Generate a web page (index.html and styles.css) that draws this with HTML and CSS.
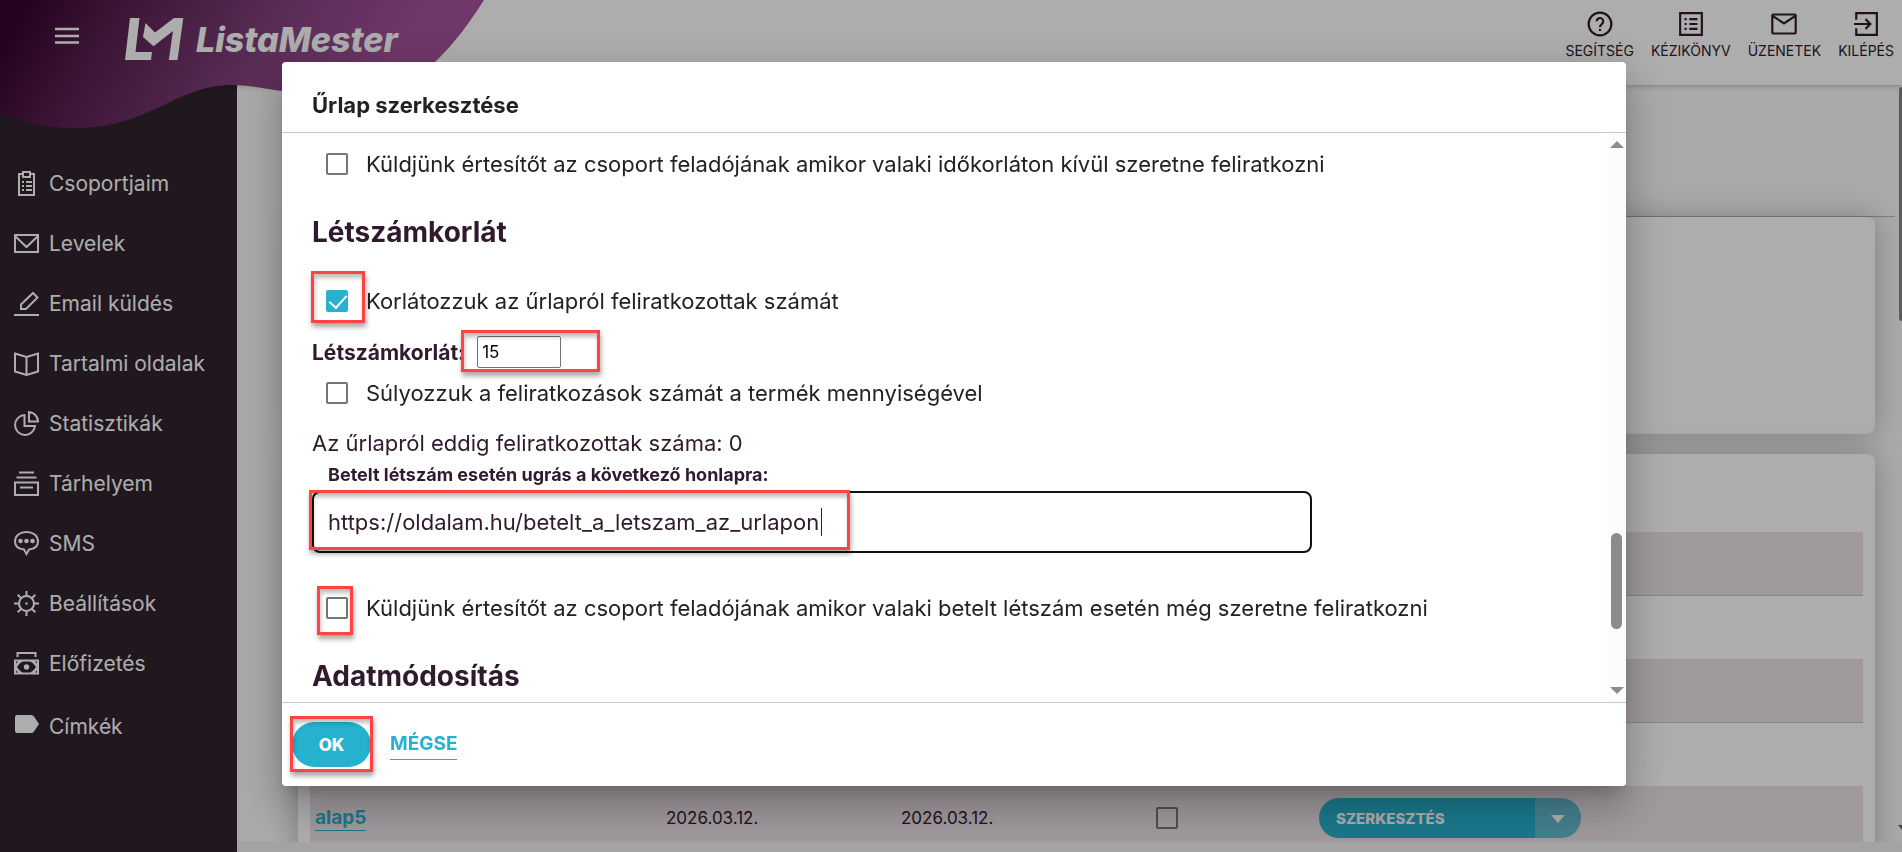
FILE: index.html
```html
<!DOCTYPE html>
<html lang="hu">
<head>
<meta charset="UTF-8">
<meta name="viewport" content="width=device-width, initial-scale=1.0">
<title>ListaMester</title>
<link rel="stylesheet" href="styles.css">
</head>
<body>

<div class="page">
  <header class="topbar">
    <!-- Purple wave behind the logo -->
    <svg class="wave" width="500" height="130" viewBox="0 0 500 130">
      <defs>
        <linearGradient id="waveFill" gradientUnits="userSpaceOnUse" x1="30" y1="0" x2="330" y2="170">
          <stop offset="0" stop-color="#37062f"/>
          <stop offset="0.25" stop-color="#5a2150"/>
          <stop offset="0.65" stop-color="#84417e"/>
          <stop offset="1" stop-color="#a5519b"/>
        </linearGradient>
      </defs>
      <path fill="url(#waveFill)" d="M0 0H484C470 22 455 43 435 62C400 95 350 101 282 91C262 88 248 85 233 85C175 85 150 128 75 128C48 128 22 122 0 113Z"/>
    </svg>
    <button class="menu-btn" type="button" aria-label="Menü">
      <svg width="24" height="18" viewBox="0 0 24 18"><path d="M0 2h24M0 9h24M0 15.500h24" stroke="#fff" stroke-width="2.500"/></svg>
    </button>
    <a class="logo" href="#">
      <svg width="59" height="43" viewBox="125 18 59 43" fill="#fff">
        <path d="M130 18h9.500L135.500 52H152l-1 8H125z"/>
        <path d="M145.500 23l9.500 9.500L174 18h9.300L177.500 60h-8.700L173 31 153.500 46.300 143 37z"/>
      </svg>
      <span>ListaMester</span>
    </a>
    <nav class="top-links">
      <a href="#">
        <svg width="26" height="26" viewBox="0 0 24 24" class="stroke"><circle cx="12" cy="12" r="10.500"/><path d="M9 9.500a3 3 0 1 1 4.800 2.400C12.700 12.700 12 13.300 12 15M12 16.500v2"/></svg>
        SEGÍTSÉG
      </a>
      <a href="#">
        <svg width="26" height="26" viewBox="0 0 24 24" class="stroke"><path d="M2 2h20v20H2zM6 7.500h2M6 12h2M6 16.500h2M10.500 7.500h7.500M10.500 12h7.500M10.500 16.500h7.500"/></svg>
        KÉZIKÖNYV
      </a>
      <a href="#">
        <svg width="26" height="26" viewBox="0 0 24 24" class="stroke"><rect x="1.200" y="3.200" width="21.600" height="17.600" rx="1"/><path d="M1.500 4.500 12 11.500 22.500 4.500"/></svg>
        ÜZENETEK
      </a>
      <a href="#">
        <svg width="26" height="26" viewBox="0 0 24 24" class="stroke"><path d="M3 8V2h19v20H3v-6M1 12h15M11.500 7.500 16 12l-4.500 4.500"/></svg>
        KILÉPÉS
      </a>
    </nav>
  </header>

  <div class="body-row">
    <nav class="sidebar">
      <a href="#">
        <svg viewBox="0 0 25 25" class="side-icon"><path d="M9 3H5v21h15V3h-4M9 1h7v5H9zM8 11h2M12 11h6M8 15h2M12 15h6M8 19h2M12 19h6"/></svg>
        Csoportjaim
      </a>
      <a href="#">
        <svg viewBox="0 0 25 25" class="side-icon"><path d="M1 4h23v17H1zM1 5l11.500 11L24 5"/></svg>
        Levelek
      </a>
      <a href="#">
        <svg viewBox="0 0 25 25" class="side-icon"><path d="M0 24h25M7 18v-4.500L19 2l4.500 4.500L12 18z"/></svg>
        Email küldés
      </a>
      <a href="#">
        <svg viewBox="0 0 25 25" class="side-icon"><path d="M1 2.500 12.500 6 24 2.500v18L12.500 24 1 20.500zM12.500 6v18"/></svg>
        Tartalmi oldalak
      </a>
      <a href="#">
        <svg viewBox="0 0 25 25" class="side-icon"><path d="M10.500 4A10 10 0 1 0 21 15H10.500zM15 1v9.500h9A9.500 9.500 0 0 0 15 1z"/></svg>
        Statisztikák
      </a>
      <a href="#">
        <svg viewBox="0 0 25 25" class="side-icon"><path d="M5 1.500h15M2.500 6.500h20M1 11.500h23V24H1zM6 16.500h13"/></svg>
        Tárhelyem
      </a>
      <a href="#">
        <svg viewBox="0 0 25 25" class="side-icon"><path d="M12.500 23 10 18.500C4.500 18 1 15 1 10.500 1 4.500 6 1 12.500 1S24 4.500 24 10.500c0 4.500-3.500 7.500-9 8z"/><g fill="currentColor" stroke="none"><circle cx="6.500" cy="10" r="2.300"/><circle cx="12.500" cy="10" r="2.300"/><circle cx="18.500" cy="10" r="2.300"/></g></svg>
        SMS
      </a>
      <a href="#">
        <svg viewBox="0 0 25 25" class="side-icon"><circle cx="12.500" cy="12.500" r="7.500"/><path d="M12.500 0v5M12.500 20v5M0 12.500h5M20 12.500h5M3.700 3.700 7 7M18 18l3.300 3.300M3.700 21.300 7 18M18 7l3.300-3.300"/><circle cx="12.500" cy="12.500" r="1.200" fill="currentColor" stroke="none"/></svg>
        Beállítások
      </a>
      <a href="#">
        <svg viewBox="0 0 25 25" class="side-icon"><path d="M3.500 6V2h18v4"/><path fill="currentColor" fill-rule="evenodd" stroke="none" d="M0 8.500h25v15H0zM3 16c2-3 4-5 6-5.500h7c2 .500 4 2.500 6 5.500-2 3-4 5-6 5.500H9C7 21 5 19 3 16zM2 10.500h2L2 12.500zM23 10.500h-2l2 2zM2 21.500h2l-2-2zM23 21.500h-2l2-2z"/><circle cx="12.500" cy="16" r="2.700" fill="currentColor" stroke="none"/></svg>
        Előfizetés
      </a>
      <a href="#">
        <svg viewBox="0 0 25 25" class="side-icon"><path fill="currentColor" stroke="none" d="M3 1h14q2 0 3 1.500L25 10l-5 7.500Q19 19 17 19H3q-2 0-2-2V3q0-2 2-2z"/></svg>
        Címkék
      </a>
    </nav>

    <main class="content">
      <div class="content-head"></div>
      <section class="card card-filter"></section>
      <section class="card card-list">
        <table class="list">
          <colgroup>
            <col class="w-name">
            <col class="w-date">
            <col class="w-date">
            <col class="w-check">
            <col>
          </colgroup>
          <tbody>
            <tr><td></td><td></td><td></td><td></td><td></td></tr>
            <tr><td></td><td></td><td></td><td></td><td></td></tr>
            <tr><td></td><td></td><td></td><td></td><td></td></tr>
            <tr><td></td><td></td><td></td><td></td><td></td></tr>
            <tr><td></td><td></td><td></td><td></td><td></td></tr>
            <tr>
              <td class="col-name"><a class="row-link" href="#">alap5</a></td>
              <td>2026.03.12.</td>
              <td>2026.03.12.</td>
              <td class="col-check"><input class="check" type="checkbox" aria-label="alap5 kijelölése"></td>
              <td>
                <div class="split">
                  <button class="split-main" type="button">SZERKESZTÉS</button>
                  <button class="split-more" type="button" aria-label="Több művelet"><svg width="14" height="8" viewBox="0 0 14 8"><path fill="#fff" d="M0 0h14L7 8z"/></svg></button>
                </div>
              </td>
            </tr>
          </tbody>
        </table>
      </section>
    </main>
  </div>
  <div class="page-thumb"></div>
  <svg class="page-arrow" width="12" height="7" viewBox="0 0 12 7"><path fill="#666" d="M0 0h12L6 7z"/></svg>
</div>

<div class="overlay">
  <div class="modal" role="dialog" aria-modal="true" aria-labelledby="modalTitle">
    <h2 class="modal-title" id="modalTitle">Űrlap szerkesztése</h2>

    <div class="modal-body">
      <form class="form" id="urlapForm">
        <div class="check-row">
          <span class="check-box"><input class="check" type="checkbox" id="idokorlat"></span>
          <label for="idokorlat">Küldjünk értesítőt az csoport feladójának amikor valaki időkorláton kívül szeretne feliratkozni</label>
        </div>

        <h3>Létszámkorlát</h3>

        <div class="check-row">
          <span class="check-box mark mark-limit"><input class="check" type="checkbox" id="korlat" checked></span>
          <label for="korlat">Korlátozzuk az űrlapról feliratkozottak számát</label>
        </div>

        <div class="limit-row">
          <label for="letszam">Létszámkorlát:</label>
          <span class="mark mark-number"><input class="number" type="text" id="letszam" value="15"></span>
        </div>

        <div class="check-row check-row-tight">
          <span class="check-box"><input class="check" type="checkbox" id="sulyozas"></span>
          <label for="sulyozas">Súlyozzuk a feliratkozások számát a termék mennyiségével</label>
        </div>

        <p class="info">Az űrlapról eddig feliratkozottak száma: 0</p>

        <label class="url-label" for="ugras">Betelt létszám esetén ugrás a következő honlapra:</label>
        <div class="url-field mark mark-url">
          <input class="url" type="text" id="ugras" value="https://oldalam.hu/betelt_a_letszam_az_urlapon">
          <span class="caret"></span>
        </div>

        <div class="check-row">
          <span class="check-box mark mark-notify"><input class="check" type="checkbox" id="betelt"></span>
          <label for="betelt">Küldjünk értesítőt az csoport feladójának amikor valaki betelt létszám esetén még szeretne feliratkozni</label>
        </div>

        <h3>Adatmódosítás</h3>
      </form>

      <div class="scrollbar">
        <svg width="14" height="7" viewBox="0 0 14 7"><path fill="#8b8b8b" d="M7 0l7 7H0z"/></svg>
        <div class="track"><div class="thumb"></div></div>
        <svg width="14" height="7" viewBox="0 0 14 7"><path fill="#8b8b8b" d="M0 0h14L7 7z"/></svg>
      </div>
    </div>

    <div class="modal-footer">
      <span class="mark mark-ok"><button class="ok-btn" type="submit" form="urlapForm">OK</button></span>
      <a class="cancel" href="#">MÉGSE</a>
    </div>
  </div>
</div>

</body>
</html>
```

FILE: styles.css
```css
* {
  box-sizing: border-box;
}

body {
  margin: 0;
  height: 100vh;
  overflow: hidden;
  font-family: Inter, "Open Sans", sans-serif;
  color: #301a2e;
  background: #f0f0f0;
}

a {
  color: inherit;
  text-decoration: none;
}

button,
input {
  font-family: inherit;
}

/* Page under the dialog */
.page {
  position: relative;
  height: 100vh;
  display: flex;
  flex-direction: column;
}

.topbar {
  position: relative;
  z-index: 2;
  height: 85px;
  flex: none;
  display: flex;
  align-items: flex-start;
  background: #fff;
  box-shadow: 0 1px 6px rgba(0, 0, 0, 0.25);
}

.wave {
  position: absolute;
  top: 0;
  left: 0;
}

.menu-btn {
  position: relative;
  margin: 27px 46px 0 55px;
  padding: 0;
  border: 0;
  background: none;
  line-height: 0;
}

.logo {
  position: relative;
  display: flex;
  align-items: center;
  gap: 12px;
  padding-top: 18px;
  color: #fff;
  font-size: 34px;
  line-height: 43px;
  font-weight: 800;
  font-style: italic;
}

.top-links {
  margin-left: auto;
  padding: 11px 8px 0 0;
  display: flex;
  gap: 17px;
}

.top-links a {
  display: flex;
  flex-direction: column;
  align-items: center;
  gap: 4px;
  font-size: 14px;
  line-height: 20px;
}

.stroke {
  fill: none;
  stroke: #301a2e;
  stroke-width: 2;
}

.body-row {
  flex: 1;
  min-height: 0;
  display: flex;
}

.sidebar {
  width: 237px;
  flex: none;
  padding: 68px 0 0 14px;
  background: #31232e;
  color: #fff;
}

.sidebar a {
  display: flex;
  align-items: center;
  gap: 10px;
  height: 60px;
  font-size: 21px;
  white-space: nowrap;
}

.sidebar a:last-child {
  padding-top: 6px;
}

.side-icon {
  width: 25px;
  height: 25px;
  flex: none;
  fill: none;
  stroke: currentColor;
  stroke-width: 2;
}

.content {
  flex: 1;
  min-width: 0;
  margin-bottom: 10px;
  padding: 0 7px 0 61px;
  overflow: hidden;
  background: #fafafa;
}

.content-head {
  height: 132px;
  border-bottom: 1px solid #b9b9b9;
}

.card {
  margin-right: 20px;
  background: #fff;
  border-radius: 8px;
  box-shadow: 0 0 30px rgba(0, 0, 0, 0.25);
}

.card-filter {
  height: 217px;
  margin-bottom: 20px;
}

.card-list {
  height: 500px;
  padding: 15px 12px;
}

.list {
  width: 100%;
  border-collapse: collapse;
  table-layout: fixed;
  font-size: 17px;
}

.w-name {
  width: 356px;
}

.w-date {
  width: 235px;
}

.w-check {
  width: 183px;
}

.list tr {
  height: 63px;
}

.list td {
  padding: 0;
}

.list tr:nth-child(even) {
  height: 64px;
  background: #ebe1e7;
  box-shadow: inset 0 -1px #cbc3cc;
}

.list .col-name {
  padding-left: 5px;
}

.list .col-check {
  padding-left: 20px;
}

.row-link {
  display: inline-block;
  color: #26b1ce;
  font-weight: 700;
  font-size: 19px;
  line-height: 24px;
  border-bottom: 1px solid #26b1ce;
}

.split {
  display: flex;
  width: 262px;
  height: 40px;
  border-radius: 20px;
  overflow: hidden;
}

.split button {
  border: 0;
  padding: 0;
  color: #fff;
  background: #26b1ce;
}

.split-main {
  flex: 1;
  text-align: left;
  font-size: 15px;
  font-weight: 800;
}

.split .split-main {
  padding-left: 17px;
}

.split .split-more {
  width: 46px;
  background: #64bdd0;
}

.page-thumb {
  position: absolute;
  top: 87px;
  right: 0;
  width: 3px;
  height: 234px;
  background: #858585;
  border-radius: 3px 0 0 3px;
}

.page-arrow {
  position: absolute;
  right: -8px;
  bottom: 20px;
}

/* Dialog */
.overlay {
  position: fixed;
  inset: 0;
  z-index: 10;
  display: flex;
  justify-content: center;
  align-items: flex-start;
  padding: 62px 0 0 6px;
  background: rgba(0, 0, 0, 0.32);
}

.modal {
  width: 71vw;
  max-width: 1344px;
  height: 85vh;
  display: flex;
  flex-direction: column;
  background: #fff;
  border-radius: 4px;
  box-shadow: 0 11px 15px -7px rgba(0, 0, 0, 0.2), 0 24px 38px 3px rgba(0, 0, 0, 0.14), 0 9px 46px 8px rgba(0, 0, 0, 0.12);
}

.modal-title {
  margin: 0;
  padding: 28px 30px 12px;
  color: #222;
  font-size: 22px;
  line-height: 30px;
  border-bottom: 1px solid #cdc6cb;
}

.modal-body {
  flex: 1;
  min-height: 0;
  display: flex;
}

.form {
  flex: 1;
  min-width: 0;
  padding: 15px 0 0 30px;
  overflow: hidden;
  font-size: 22px;
}

.form h3 {
  margin: 36px 0 37px;
  font-size: 28px;
  line-height: 32px;
}

.check-row {
  display: flex;
  align-items: center;
  gap: 18px;
  height: 32px;
  padding-left: 14px;
  color: #222;
  white-space: nowrap;
}

.check-box {
  display: flex;
}

.check {
  appearance: none;
  display: block;
  margin: 0;
  width: 22px;
  height: 22px;
  border: 2px solid #757575;
  border-radius: 2px;
  background: transparent;
}

.check:checked {
  border-color: #26b1ce;
  background: #26b1ce;
}

.check:checked::before {
  content: "";
  display: block;
  width: 8px;
  height: 15px;
  margin: -1px 0 0 5px;
  border: solid #fff;
  border-width: 0 2px 2px 0;
  transform: rotate(42deg);
}

.limit-row {
  display: flex;
  align-items: center;
  gap: 12px;
  height: 32px;
  margin-top: 19px;
  font-size: 21px;
  font-weight: 700;
}

.number {
  display: block;
  width: 84px;
  height: 32px;
  padding: 0 4px;
  border: 1px solid #767676;
  border-radius: 2px;
  font-size: 17px;
}

.check-row-tight {
  margin-top: 9px;
}

.info {
  margin: 18px 0 4px;
  line-height: 32px;
}

.url-label {
  display: block;
  padding-left: 16px;
  font-size: 18px;
  font-weight: 700;
  line-height: 24px;
  margin-bottom: 4px;
}

.url-field {
  max-width: 1000px;
  margin-bottom: 39px;
}

.url {
  display: block;
  width: 100%;
  height: 62px;
  padding: 0 14px;
  border: 2px solid #111;
  border-radius: 8px;
  color: #301a2e;
  font-size: 22px;
}

.caret {
  position: absolute;
  top: 17px;
  left: 509px;
  width: 1px;
  height: 28px;
  background: #301a2e;
}

.scrollbar {
  width: 19px;
  padding: 8px 0;
  display: flex;
  flex-direction: column;
  align-items: center;
  background: #fcfcfc;
}

.track {
  flex: 1;
  padding-top: 385px;
}

.thumb {
  width: 11px;
  height: 96px;
  border-radius: 6px;
  background: #8b8b8b;
}

.modal-footer {
  display: flex;
  align-items: center;
  gap: 19px;
  height: 84px;
  padding: 0 10px;
  border-top: 1px solid #cdc6cb;
}

.ok-btn {
  display: block;
  width: 79px;
  height: 45px;
  border: 0;
  border-radius: 23px;
  background: #26b1ce;
  color: #fff;
  font-size: 17px;
  font-weight: 800;
}

.cancel {
  color: #26b1ce;
  font-size: 19px;
  font-weight: 700;
  line-height: 30px;
  border-bottom: 1px solid #26b1ce;
}

/* Red highlight frames */
.mark {
  position: relative;
}

.mark::after {
  content: "";
  position: absolute;
  box-sizing: border-box;
  border: 3px solid #ff4343;
  box-shadow: 1px 4px 5px rgba(0, 0, 0, 0.35), inset 1px 4px 4px rgba(0, 0, 0, 0.25);
  pointer-events: none;
}

.mark-limit::after {
  inset: -19px -17px -11px -15px;
}

.mark-number::after {
  inset: -6px -39px -4px -16px;
}

.mark-url::after {
  inset: -1px auto 3px -3px;
  width: 541px;
}

.mark-notify::after {
  inset: -11px -5px -16px -9px;
}

.mark-ok::after {
  inset: -6px -2px -5px -2px;
}
```
